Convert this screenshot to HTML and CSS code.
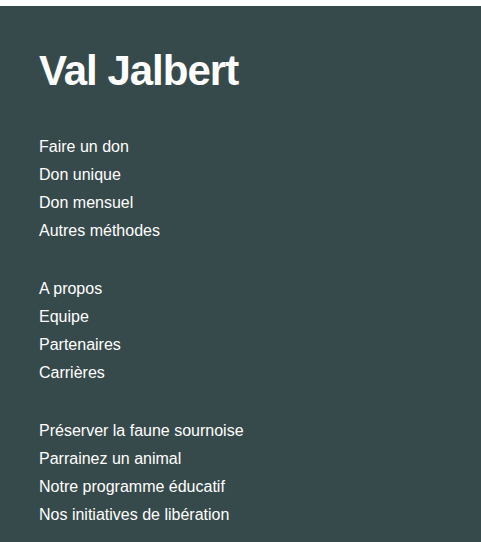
FILE: index.html
```html
<!DOCTYPE html>
<html lang="fr">
<head>
<meta charset="utf-8">
<title>Val Jalbert</title>
<link rel="stylesheet" href="styles.css">
</head>
<body>
<footer class="footer">
  <h1 class="brand">Val Jalbert</h1>
  <nav class="groups">
    <ul class="group">
      <li><a href="#">Faire un don</a></li>
      <li><a href="#">Don unique</a></li>
      <li><a href="#">Don mensuel</a></li>
      <li><a href="#">Autres méthodes</a></li>
    </ul>
    <ul class="group">
      <li><a href="#">A propos</a></li>
      <li><a href="#">Equipe</a></li>
      <li><a href="#">Partenaires</a></li>
      <li><a href="#">Carrières</a></li>
    </ul>
    <ul class="group">
      <li><a href="#">Préserver la faune sournoise</a></li>
      <li><a href="#">Parrainez un animal</a></li>
      <li><a href="#">Notre programme éducatif</a></li>
      <li><a href="#">Nos initiatives de libération</a></li>
    </ul>
  </nav>
</footer>
</body>
</html>
```

FILE: styles.css
```css
html, body {
  margin: 0;
  padding: 0;
  background: #ffffff;
}
body {
  padding-top: 6px;
  font-family: "Liberation Sans", Arial, sans-serif;
}
.footer {
  background: #374a4b;
  color: #ffffff;
  min-height: 536px;
  box-sizing: border-box;
  padding: 42px 40px 14px 39px;
}
.brand {
  margin: 0;
  font-size: 42px;
  font-weight: 700;
  letter-spacing: -1px;
  line-height: 46px;
}
.groups {
  display: flex;
  flex-direction: column;
  gap: 30px;
  margin-top: 39px;
}
.group {
  list-style: none;
  margin: 0;
  padding: 0;
}
.group li {
  font-size: 16px;
  line-height: 28px;
}
.group a {
  color: #ffffff;
  text-decoration: none;
}
```
